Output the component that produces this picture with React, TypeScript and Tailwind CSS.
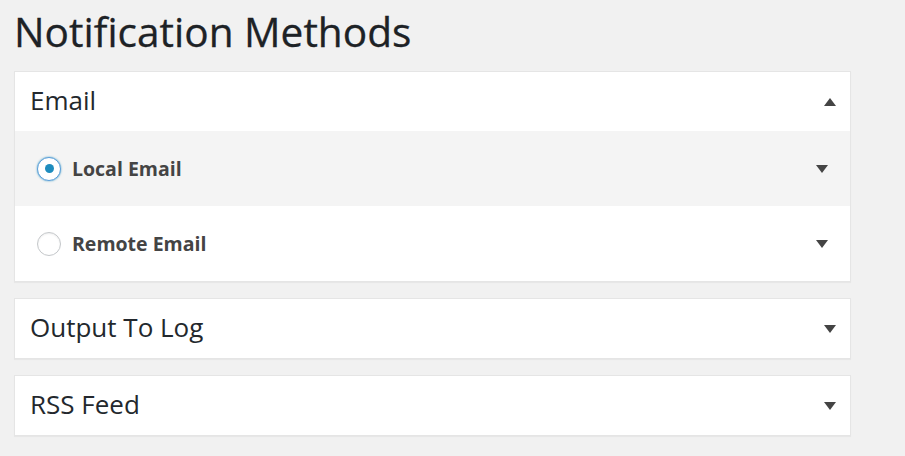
import React from "react";

const font = { fontFamily: '"Open Sans", "Noto Sans", sans-serif' };

function Tri({ up }: { up?: boolean }) {
  return (
    <svg width="12" height="8" viewBox="0 0 12 8" className="block">
      {up ? <polygon points="0,8 12,8 6,0" fill="#444" /> : <polygon points="0,0 12,0 6,8" fill="#444" />}
    </svg>
  );
}

function Radio({ checked }: { checked?: boolean }) {
  return checked ? (
    <span className="w-6 h-6 rounded-full bg-white border border-[#5b9dd9] shadow-[0_0_2px_rgba(30,140,190,0.8)] flex items-center justify-center shrink-0">
      <span className="w-[9px] h-[9px] rounded-full bg-[#1e8cbe]" />
    </span>
  ) : (
    <span className="w-6 h-6 rounded-full bg-white border border-[#c4c7ca] shadow-[inset_0_1px_2px_rgba(0,0,0,0.07)] shrink-0" />
  );
}

function Header({ title, up }: { title: string; up?: boolean }) {
  return (
    <div className="h-[59px] flex items-center justify-between pl-[15px] pr-[14px]">
      <span className="text-[26px] text-[#23282d] leading-none pb-[3px]">{title}</span>
      <Tri up={up} />
    </div>
  );
}

function SubRow({ label, checked, bg }: { label: string; checked?: boolean; bg: string }) {
  return (
    <div className={`h-[75px] flex items-center justify-between pl-[22px] pr-[22px] ${bg}`}>
      <div className="flex items-center gap-[11px]">
        <Radio checked={checked} />
        <span className="text-[19.5px] font-bold text-[#444] leading-none">{label}</span>
      </div>
      <Tri />
    </div>
  );
}

export default function App() {
  return (
    <div className="min-h-[456px] bg-[#f1f1f1] px-[14px] pt-[7px] pb-5" style={font}>
      <h1 className="text-[40.6px] leading-[50px] text-[#1d2226] font-normal mb-[14px] [-webkit-text-stroke:0.3px_#1d2226]">Notification Methods</h1>
      <div className="w-[837px] flex flex-col gap-4">
        <div className="bg-white border border-[#e5e5e5] shadow-[0_1px_1px_rgba(0,0,0,0.04)]">
          <Header title="Email" up />
          <SubRow label="Local Email" checked bg="bg-[#f4f4f4]" />
          <SubRow label="Remote Email" bg="bg-white" />
        </div>
        <div className="bg-white border border-[#e5e5e5] shadow-[0_1px_1px_rgba(0,0,0,0.04)]">
          <Header title="Output To Log" />
        </div>
        <div className="bg-white border border-[#e5e5e5] shadow-[0_1px_1px_rgba(0,0,0,0.04)]">
          <Header title="RSS Feed" />
        </div>
      </div>
    </div>
  );
}
